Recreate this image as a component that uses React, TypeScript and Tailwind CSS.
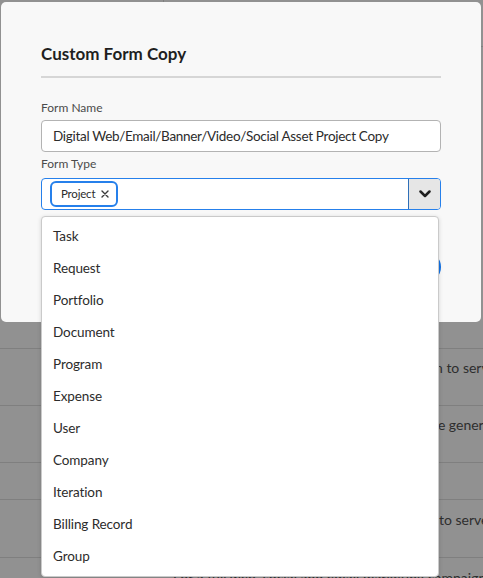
import React from "react";

const items = [
  "Task",
  "Request",
  "Portfolio",
  "Document",
  "Program",
  "Expense",
  "User",
  "Company",
  "Iteration",
  "Billing Record",
  "Group",
];

function Chevron() {
  return (
    <svg width="12" height="8" viewBox="0 0 12 8" fill="none">
      <path d="M1.5 1.5 L6 6 L10.5 1.5" stroke="#1f1f1f" strokeWidth="2.5" strokeLinecap="round" strokeLinejoin="round" />
    </svg>
  );
}

function Cross() {
  return (
    <svg width="8" height="8" viewBox="0 0 8 8" fill="none">
      <path d="M1 1 L7 7 M7 1 L1 7" stroke="#3a3a3a" strokeWidth="1.4" strokeLinecap="round" />
    </svg>
  );
}

export default function App() {
  return (
    <div className="relative w-[483px] h-[578px] overflow-hidden bg-[#919191] font-[family-name:Lato,sans-serif] text-[#2c2c2c]">
      {/* background page */}
      <div className="flex flex-col">
        <div className="h-[348px] flex">
          <div className="w-[164px] border-r border-[#7f7f7f]" />
          <div className="flex-1 flex flex-col">
            <div className="h-[47px] border-b border-[#7f7f7f]" />
          </div>
        </div>
        <div className="h-[57px] border-t border-[#7f7f7f] pl-[173px] pt-[11px] text-[14px] leading-[16px] text-[#2e2e2e] whitespace-nowrap">
          Request intake for digital web assets; a form to serve
        </div>
        <div className="h-[57px] border-t border-[#7f7f7f] pl-[173px] pt-[11px] text-[14px] leading-[16px] text-[#2e2e2e] whitespace-nowrap">
          Standard project templates, copied from one general
        </div>
        <div className="h-[37px] border-t border-[#7f7f7f]" />
        <div className="h-[58px] border-t border-[#7f7f7f] pl-[173px] pt-[12px] text-[14px] leading-[16px] text-[#2e2e2e] whitespace-nowrap">
          Creative request intake for marketing team to serve
        </div>
        <div className="h-[40px] border-t border-[#7f7f7f] pl-[173px] pt-[12px] text-[14px] leading-[16px] text-[#2e2e2e] whitespace-nowrap">
          For a full web, social and email marketing campaign
        </div>
      </div>

      {/* modal */}
      <div className="absolute left-[1px] top-[2px] w-[480px] h-[320px] rounded-[5px] bg-[#f8f8f8] px-[40px] pt-[40px] flex flex-col">
        <div className="text-[17px] leading-[24px] font-bold text-[#1f1f1f]">Custom Form Copy</div>
        <div className="mt-[10px] h-[2px] bg-[#d6d6d6]" />
        <div className="mt-[22px] text-[12px] leading-[16px] text-[#4b4b4b]">Form Name</div>
        <div className="mt-[4px] h-[32px] rounded-[4px] border border-[#b3b3b3] bg-white flex items-center px-[11px] text-[13.5px] tracking-[-0.3px] whitespace-nowrap">
          Digital Web/Email/Banner/Video/Social Asset Project Copy
        </div>
        <div className="mt-[4px] text-[12px] leading-[16px] text-[#4b4b4b]">Form Type</div>
        <div className="mt-[6px] h-[32px] rounded-[4px] border border-[#2680eb] bg-white flex overflow-hidden">
          <div className="flex-1 flex items-center pl-[8px]">
            <div className="h-[26px] rounded-[6px] border-2 border-[#2680eb] bg-white flex items-center pl-[9px] pr-[7px] gap-[6px] text-[11.5px] tracking-[-0.2px]">
              <span>Project</span>
              <Cross />
            </div>
          </div>
          <div className="w-[32px] border-l border-[#2f6fb8] bg-[#e6e6e6] flex items-center justify-center">
            <Chevron />
          </div>
        </div>
        <div className="mt-[41px] flex justify-end gap-[12px]">
          <div className="h-[32px] px-[16px] rounded-full bg-[#1473e6] text-white text-[14px] font-bold flex items-center">Save</div>
        </div>
      </div>

      {/* dropdown menu */}
      <div className="absolute left-[41px] top-[216px] w-[398px] h-[361px] rounded-[4px] border border-[#cacaca] bg-white shadow-[0_1px_4px_rgba(0,0,0,0.15)] pt-[3px] flex flex-col">
        {items.map((it) => (
          <div key={it} className="h-[32px] shrink-0 flex items-center px-[11px] text-[13.5px] tracking-[-0.1px] text-[#2c2c2c]">
            {it}
          </div>
        ))}
      </div>
    </div>
  );
}
